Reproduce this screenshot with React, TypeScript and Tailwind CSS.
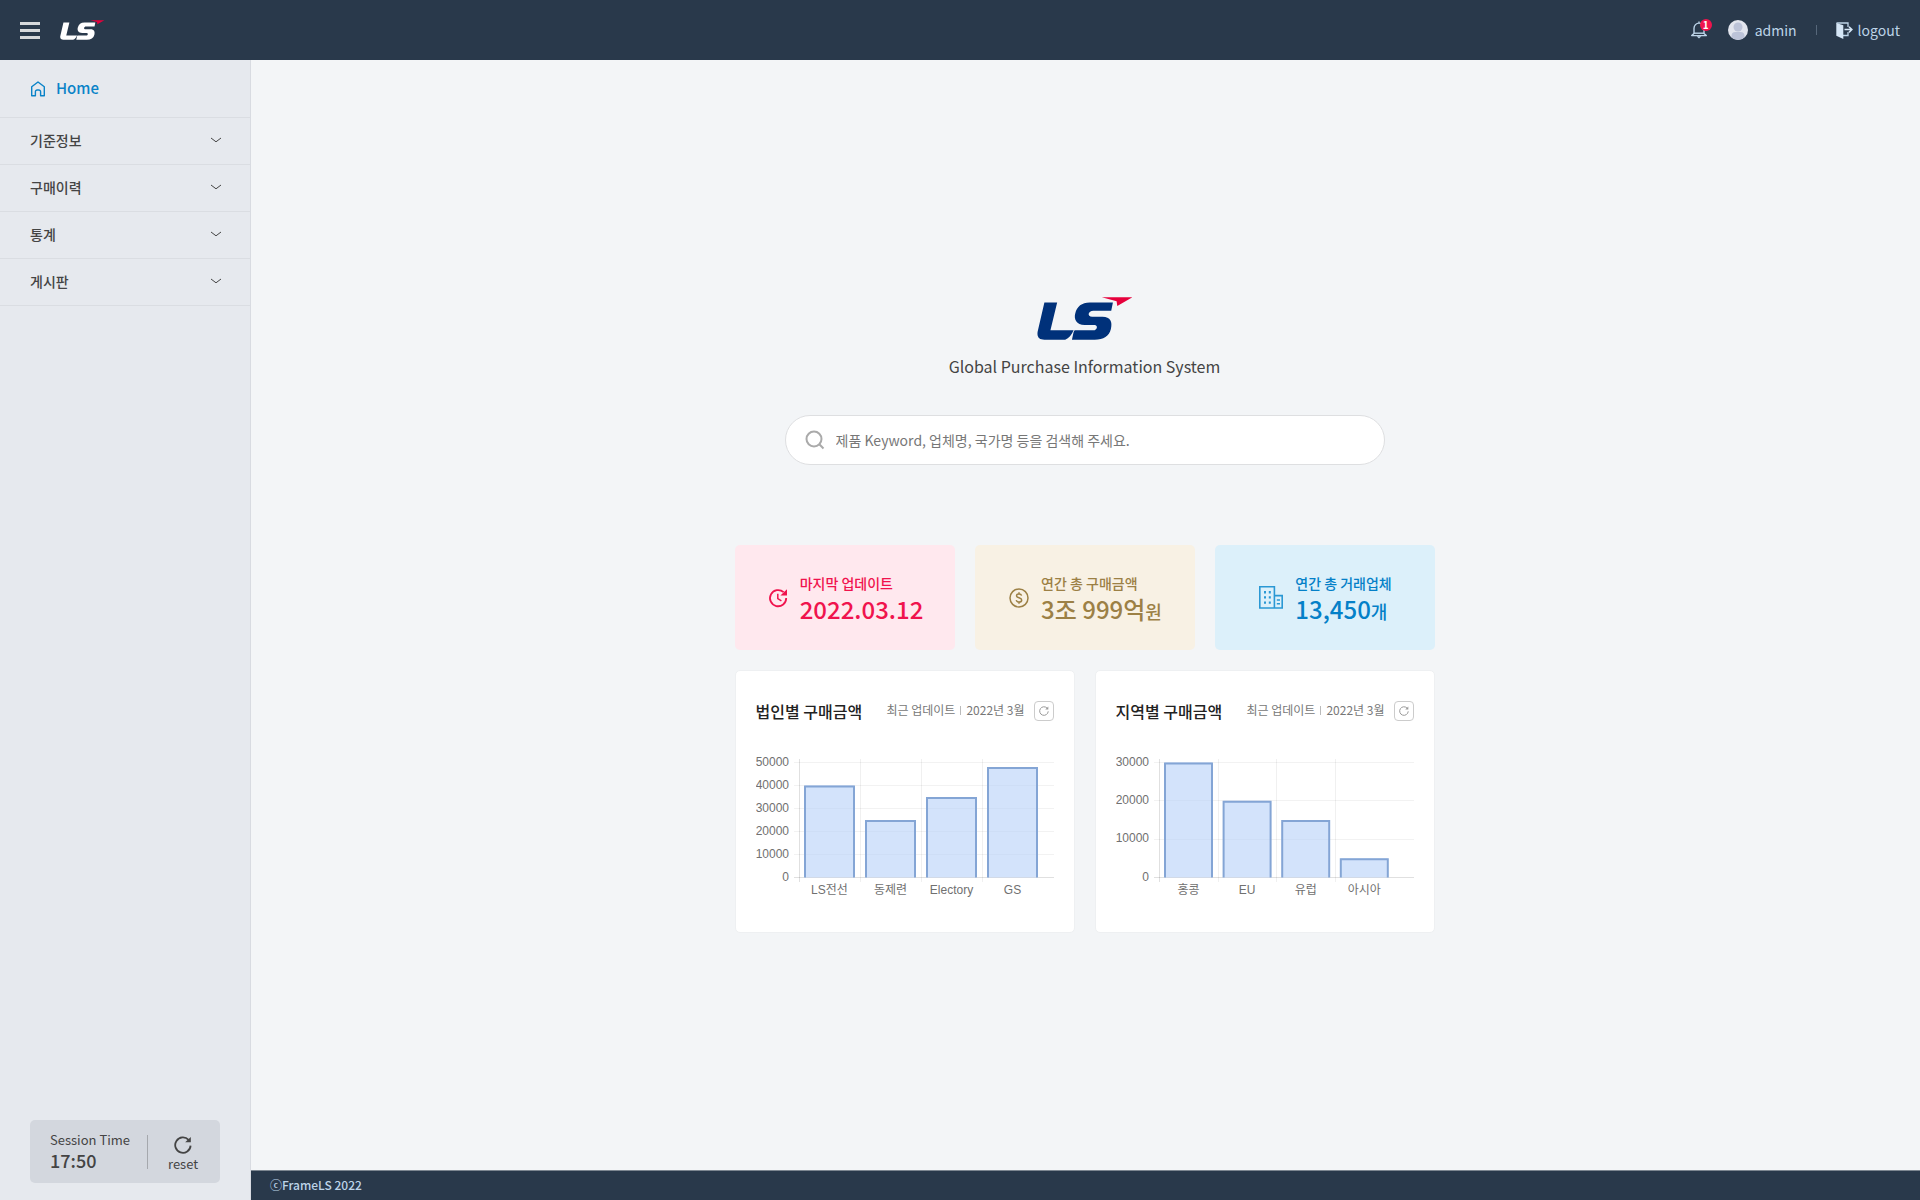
import React from "react";

type BarChartProps = {
  label: string;
  max: number;
  step: number;
  pitch: number;
  barWidth: number;
  data: { name: string; value: number }[];
};

type StatProps = {
  tone: string;
  icon: React.ReactNode;
  title: string;
  value: string;
  unit?: string;
};

const MENU = ["기준정보", "구매이력", "통계", "게시판"];

const COMPANY = [
  { name: "LS전선", value: 40000 },
  { name: "동제련", value: 25000 },
  { name: "Electory", value: 35000 },
  { name: "GS", value: 48000 },
];

const REGION = [
  { name: "홍콩", value: 30000 },
  { name: "EU", value: 20000 },
  { name: "유럽", value: 15000 },
  { name: "아시아", value: 5000 },
];

function Logo({ className, body, accent }: { className: string; body: string; accent: string }) {
  return (
    <svg viewBox="0 0 285 128" className={className} role="img" aria-label="LS">
      <path
        fill={body}
        d="M22 16H60L40 99H109C103 114 95 122 84 127H22C7 127-1 119 2 103Z"
      />
      <path
        fill={body}
        d="M226 16L221 41H168C151 41 149 59 164 59H195C219 59 225 74 220 95C215 116 198 127 172 127H104L109 104L112 99H168C179 99 183 84 171 83H142C117 82 109 66 114 48C119 28 133 16 157 16Z"
      />
      <path fill={accent} d="M193 1H284L239 27L237 13Z" />
    </svg>
  );
}

function ReloadIcon({ className }: { className: string }) {
  return (
    <svg viewBox="0 0 18 18" className={className} fill="none" stroke="currentColor" strokeWidth="1.8" aria-hidden="true">
      <path d="M16.6 9.6A7.7 7.7 0 1 1 14.6 3.9" />
      <path d="M16.8 1V6.2H11.2Z" fill="currentColor" stroke="none" />
    </svg>
  );
}

function BarChart({ label, max, step, pitch, barWidth, data }: BarChartProps) {
  const base = 122.5;
  const height = 115;
  const ticks = Array.from({ length: max / step + 1 }, (_, i) => i * step);
  const y = (v: number) => base - (v / max) * height;
  return (
    <svg viewBox="0 0 298 149" className="block w-full" role="img" aria-label={label}>
      <g stroke="#000000" strokeOpacity="0.07" shapeRendering="crispEdges">
        {ticks.map((t) => (
          <line key={t} x1="38" x2="298" y1={y(t)} y2={y(t)} strokeOpacity={t === 0 ? 0.12 : 0.05} />
        ))}
        {data.map((d, i) => (
          <line
            key={d.name}
            x1={43.5 + i * pitch}
            x2={43.5 + i * pitch}
            y1="4"
            y2="127"
            strokeOpacity={i === 0 ? 0.12 : 0.06}
          />
        ))}
      </g>
      {data.map((d, i) => {
        const x = 49 + i * pitch;
        return (
          <g key={d.name}>
            <rect x={x} y={y(d.value)} width={barWidth} height={base - y(d.value)} fill="#b5d0f8" fillOpacity="0.6" />
            <path
              d={`M${x} ${base}V${y(d.value) + 1}H${x + barWidth}V${base}`}
              fill="none"
              stroke="#84a5d5"
              strokeWidth="2"
            />
          </g>
        );
      })}
      <g fill="#707070" fontSize="12" fontFamily="'Liberation Sans', 'Noto Sans CJK KR', sans-serif">
        {ticks.map((t) => (
          <text key={t} x="33" y={y(t) + 3} textAnchor="end">
            {t}
          </text>
        ))}
        {data.map((d, i) => (
          <text key={d.name} x={49 + i * pitch + barWidth / 2} y="139" textAnchor="middle">
            {d.name}
          </text>
        ))}
      </g>
    </svg>
  );
}

function ChartCard({ title, children }: { title: string; children: React.ReactNode }) {
  return (
    <section className="flex-1 rounded-[5px] border border-[#eef0f2] bg-white px-5 pt-[30px] pb-7">
      <div className="flex h-5 items-center">
        <h2 className="text-base leading-5 font-medium whitespace-nowrap text-[#222]">{title}</h2>
        <p className="ml-auto flex items-center pb-0.5 text-xs leading-5 whitespace-nowrap text-[#777]">
          최근 업데이트
          <span className="mx-[5px] h-[9px] w-px bg-[#bbb]" />
          2022년 3월
        </p>
        <button
          type="button"
          aria-label={`${title} 새로고침`}
          className="ml-[9px] flex size-5 items-center justify-center rounded border border-[#ccc] text-[#999]"
        >
          <ReloadIcon className="size-2.5" />
        </button>
      </div>
      <div className="mt-[34px]">{children}</div>
    </section>
  );
}

function Stat({ tone, icon, title, value, unit }: StatProps) {
  return (
    <div className={`flex h-[105px] flex-1 items-center justify-center gap-3 rounded-[5px] pl-0.5 ${tone}`}>
      {icon}
      <div className="pt-0.5">
        <div className="text-sm leading-5 font-medium">{title}</div>
        <div className="text-2xl leading-8 font-medium">
          {value}
          {unit && <span className="text-lg leading-none">{unit}</span>}
        </div>
      </div>
    </div>
  );
}

export default function App() {
  return (
    <div className="flex min-h-screen flex-col bg-[#f3f5f7] font-['Noto_Sans_CJK_KR','Noto_Sans_CJK_SC',sans-serif] text-[#444]">
      <header className="flex h-[60px] items-center bg-[#29394b] px-5 text-[#bdd4e8]">
        <button type="button" aria-label="menu" className="flex w-5 flex-col gap-1">
          <span className="h-[3px] bg-[#d6d9dc]" />
          <span className="h-[3px] bg-[#d6d9dc]" />
          <span className="h-[3px] bg-[#d6d9dc]" />
        </button>
        <a href="#" className="ml-5">
          <Logo className="h-5" body="#ffffff" accent="#e6003c" />
        </a>
        <div className="ml-auto flex items-center text-sm leading-5">
          <button type="button" aria-label="notifications" className="relative">
            <svg viewBox="0 0 18 18" className="size-[18px]" fill="none" stroke="currentColor" strokeWidth="1.4" aria-hidden="true">
              <path d="M9 .5V2M4 12.5V7.3A5 5.2 0 0 1 14 7.3V12.5L16.3 14.6H1.7Z" strokeLinejoin="round" />
              <path d="M4 12.2H14" />
              <path d="M6.6 15.3H11.4L9 17.6Z" fill="currentColor" stroke="none" />
            </svg>
            <span className="absolute -top-0.5 left-2.5 flex size-3 items-center justify-center rounded-full bg-[#f0134d] text-[10px] leading-3 font-bold text-white">
              1
            </span>
          </button>
          <a href="#" className="ml-5 flex items-center gap-[7px]">
            <svg viewBox="0 0 20 20" className="size-5" aria-hidden="true">
              <defs>
                <clipPath id="avatar">
                  <circle cx="10" cy="10" r="10" />
                </clipPath>
              </defs>
              <g clipPath="url(#avatar)">
                <rect width="20" height="20" fill="#e2e5ee" />
                <circle cx="10" cy="7" r="4.5" fill="#bcc3d8" />
                <path d="M3.5 20V16A4 4 0 0 1 7.5 12H12.5A4 4 0 0 1 16.5 16V20Z" fill="#bcc3d8" />
              </g>
            </svg>
            <span className="pb-px">admin</span>
          </a>
          <span className="mx-[19px] h-2.5 w-px bg-[#56677a]" />
          <a href="#" className="flex items-center gap-[5px]">
            <svg viewBox="0 0 17 17" className="size-[17px]" aria-hidden="true">
              <path d="M.5 1H12V5M12 10V13.5H7" fill="none" stroke="currentColor" strokeWidth="1.3" />
              <path d="M.3 1L7.3 3.3V17L.3 13.8Z" fill="#d5e6f6" />
              <path d="M8.5 7.6H15.8M13 4.8L15.9 7.6L13 10.4" fill="none" stroke="#d5e6f6" strokeWidth="1.5" />
            </svg>
            <span className="pb-px">logout</span>
          </a>
        </div>
      </header>

      <div className="flex flex-1">
        <aside className="flex w-[251px] shrink-0 flex-col border-r border-[#d8dbe1] bg-[#e6e9ee]">
          <nav>
            <a
              href="#"
              className="flex h-[58px] items-center gap-2.5 border-b border-[#dadde2] px-[30px] text-[15px] font-medium text-[#0a83c8]"
            >
              <svg viewBox="0 0 16 16" className="size-4" fill="none" stroke="currentColor" strokeWidth="1.4" strokeLinejoin="round" aria-hidden="true">
                <path d="M1.7 5.8L8 1L14.3 5.8V14.8H10.6V10.8A1.8 1.8 0 0 0 8.8 9H7.2A1.8 1.8 0 0 0 5.4 10.8V14.8H1.7Z" />
              </svg>
              Home
            </a>
            <ul>
              {MENU.map((m) => (
                <li key={m}>
                  <button
                    type="button"
                    className="flex h-[47px] w-full items-center justify-between border-b border-[#dadde2] pr-7 pb-0.5 pl-[30px] text-sm font-medium"
                  >
                    {m}
                    <svg viewBox="0 0 12 6" className="h-1.5 w-3" fill="none" stroke="#444" strokeWidth="1" aria-hidden="true">
                      <path d="M1 1L6 4.8L11 1" />
                    </svg>
                  </button>
                </li>
              ))}
            </ul>
          </nav>
          <div className="mx-[30px] mt-auto mb-[17px] flex h-[63px] items-center rounded-[5px] bg-[#d3d7de] px-5">
            <div className="pb-1">
              <div className="text-[13px] leading-5">Session Time</div>
              <div className="text-lg leading-5 font-medium">17:50</div>
            </div>
            <span className="ml-[17px] h-[34px] w-px bg-[#a5a8ad]" />
            <button type="button" className="ml-5 flex flex-col items-center pt-1.5 text-[13px] leading-5">
              <ReloadIcon className="size-[18px]" />
              reset
            </button>
          </div>
        </aside>

        <div className="flex min-w-0 flex-1 flex-col">
          <main className="flex flex-1 flex-col items-center justify-center pr-0.5">
            <Logo className="h-[43px]" body="#00317a" accent="#e6003c" />
            <h1 className="mt-3.5 text-base leading-6">Global Purchase Information System</h1>
            <label className="mt-[37px] flex h-[50px] w-full max-w-[600px] items-center gap-[11px] rounded-full border border-[#dedfe1] bg-white px-[19px]">
              <svg viewBox="0 0 20 20" className="size-5 shrink-0" fill="none" stroke="#aaa" strokeWidth="2" aria-hidden="true">
                <circle cx="9" cy="9" r="7.5" />
                <path d="M14.3 14.3L18.5 18.5" />
              </svg>
              <input
                type="text"
                aria-label="검색"
                placeholder="제품 Keyword, 업체명, 국가명 등을 검색해 주세요."
                className="w-full bg-transparent text-sm outline-none placeholder:text-[#777]"
              />
            </label>

            <div className="mt-20 flex w-full max-w-[700px] gap-5">
              <Stat
                tone="bg-[#ffe8ee] text-[#f0134d]"
                title="마지막 업데이트"
                value="2022.03.12"
                icon={
                  <svg viewBox="0 0 20 20" className="size-5" fill="none" stroke="currentColor" strokeWidth="1.8" aria-hidden="true">
                    <path d="M18.2 10A8.1 8.1 0 1 1 15.6 4.2" />
                    <path d="M19 1.2V7.6H12.4Z" fill="currentColor" stroke="none" />
                    <path d="M9.8 5.8V10.6L13.4 12.8" strokeWidth="1.5" />
                  </svg>
                }
              />
              <Stat
                tone="bg-[#f8f1e4] text-[#9c8045]"
                title="연간 총 구매금액"
                value="3조 999억"
                unit="원"
                icon={
                  <svg viewBox="0 0 20 20" className="size-5" fill="none" stroke="currentColor" strokeWidth="1.5" aria-hidden="true">
                    <circle cx="10" cy="10" r="9" />
                    <path d="M12.6 7.6C12.3 6.4 11.3 5.9 10 5.9C8.5 5.9 7.5 6.6 7.5 7.8C7.5 10.4 12.7 9.2 12.7 12C12.7 13.3 11.6 14.1 10 14.1C8.5 14.1 7.5 13.5 7.2 12.2M10 4.3V6M10 14V15.7" />
                  </svg>
                }
              />
              <Stat
                tone="bg-[#dcf0fa] text-[#0480c8]"
                title="연간 총 거래업체"
                value="13,450"
                unit="개"
                icon={
                  <svg viewBox="0 0 24 23" className="h-[23px] w-6" fill="none" stroke="#2a98d4" strokeWidth="1.6" aria-hidden="true">
                    <path d="M.8.8H15.4V22H.8ZM15.4 9.6H23.2V22H15.4" />
                    <path d="M6 5V19M10.8 5V19" strokeWidth="2" strokeDasharray="2.4 2.8" />
                    <path d="M17.8 14H21M17.8 17.8H21" strokeWidth="1.6" />
                  </svg>
                }
              />
            </div>

            <div className="mt-5 flex w-full max-w-[700px] gap-5">
              <ChartCard title="법인별 구매금액">
                <BarChart label="법인별 구매금액" max={50000} step={10000} pitch={61} barWidth={49} data={COMPANY} />
              </ChartCard>
              <ChartCard title="지역별 구매금액">
                <BarChart label="지역별 구매금액" max={30000} step={10000} pitch={58.6} barWidth={47} data={REGION} />
              </ChartCard>
            </div>
          </main>
          <footer className="flex h-[30px] items-center border-t border-[#7d8791] bg-[#29394b] px-[19px] pb-px text-xs font-medium text-[#bdd4e8]">
            ⓒFrameLS 2022
          </footer>
        </div>
      </div>
    </div>
  );
}
